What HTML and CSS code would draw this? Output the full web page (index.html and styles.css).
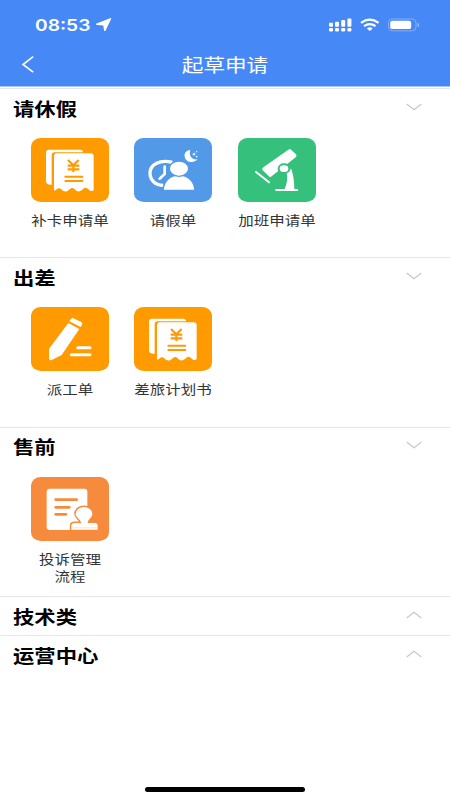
FILE: index.html
```
<!DOCTYPE html>
<html lang="zh-CN">
<head>
<meta charset="utf-8">
<title>起草申请</title>
<link rel="stylesheet" href="styles.css">
</head>
<body>
<svg class="defs" width="0" height="0">
  <symbol id="receipt" viewBox="33 24 234 192">
    <path d="M78 67Q78 59 86 59H181Q189 59 189 67H104Q95 67 95 76V164Q78 165 78 154Z" fill="#fff"/>
    <path d="M102 79Q102 70 111 70H212Q221 70 221 79V181C214 186 208 181 203 176Q197 171 190 176C180 186 172 187 164 178Q157 171 150 177C140 187 132 187 124 178Q117 171 110 178Q105 183 102 181Z" fill="#fff"/>
    <path d="M144 90L160 106L176 90M160 105V126M143 107H178M143 118H178" fill="none" stroke="#ff9b00" stroke-width="6.5"/>
    <path d="M136 140H187M136 153H187" stroke="#ff9b00" stroke-width="6" stroke-linecap="round"/>
  </symbol>
  <symbol id="chevron" viewBox="0 0 16 8"><path d="M.7 1L8 6.7L15.3 1" fill="none" stroke="#c6c6c6" stroke-width="1.1"/></symbol>
</svg>
<header class="top">
  <div class="status">
    <span class="time">08:53</span>
    <svg class="location" viewBox="0 0 16 14"><path d="M.5 5.6L14 .2Q15.6-.2 15 1.2L9.6 12.4Q8.6 13.8 8 12.4L7.3 7.4L1 7Q-.6 6.4.5 5.6Z" fill="#fff"/></svg>
    <svg class="signals" viewBox="0 0 92 14" fill="#fff">
      <rect x="0" y="4.8" width="4" height="4" rx="1"/><rect x="6" y="3.8" width="4" height="5" rx="1"/><rect x="12.2" y="2" width="4" height="6.8" rx="1"/><rect x="18.4" y=".5" width="4" height="8.3" rx="1"/>
      <rect x="0" y="10" width="4" height="3.5" rx="1.3"/><rect x="6" y="10" width="4" height="3.5" rx="1.3"/><rect x="12.2" y="10" width="4" height="3.5" rx="1.3"/><rect x="18.4" y="10" width="4" height="3.5" rx="1.3"/>
      <path d="M32 4.8Q40.8-1.5 49.6 4.8M35 8.2Q40.8 4 46.6 8.2" fill="none" stroke="#fff" stroke-width="2.2"/>
      <path d="M37.9 10.4Q40.8 8.2 43.7 10.4L40.8 13Z"/>
      <rect x="59.5" y="1" width="27.5" height="11.8" rx="3.8" fill="none" stroke="#84aefa"/>
      <rect x="61.2" y="2.7" width="21" height="8.4" rx="2.2"/><path d="M88.6 5Q90.2 5.2 90.2 7T88.6 9Z" fill="#9fc1fb"/>
    </svg>
  </div>
  <div class="nav">
    <svg class="back" viewBox="0 0 12 17"><path d="M11.2 .7L1 8.5L11.2 16.2" fill="none" stroke="#fff" stroke-width="1.6"/></svg>
    <h1><span>起草申请</span></h1>
  </div>
</header>
<main>
  <section class="group open">
    <div class="head"><h2>请休假</h2><svg class="chev"><use href="#chevron"/></svg></div>
    <div class="items">
      <div class="item"><svg class="tile orange"><use href="#receipt"/></svg><p>补卡申请单</p></div>
      <div class="item">
        <svg class="tile blue" viewBox="28 24 234 192">
          <path d="M143 97C106 87 76 104 76 130C76 151 93 166 116 166" fill="none" stroke="#fff" stroke-width="10"/>
          <path d="M120 110V132L105 146" fill="none" stroke="#fff" stroke-width="8" stroke-linecap="round"/>
          <path d="M115 181C117 153 136 135 163 135S209 153 211 181Z" fill="#fff" stroke="#5299e8" stroke-width="4"/>
          <ellipse cx="163" cy="116" rx="29" ry="23" fill="#fff" stroke="#5299e8" stroke-width="4"/>
          <path d="M197 60C184 61 178 70 180 80C184 99 209 101 218 88C203 91 191 77 197 60Z" fill="#fff"/>
          <path d="M208 67l2 4l4 1l-4 2l-2 4l-2-4l-4-2l4-1Z" fill="#fff"/><circle cx="216" cy="65" r="2" fill="#fff"/><circle cx="216" cy="80" r="2.4" fill="#fff"/>
        </svg><p>请假单</p>
      </div>
      <div class="item">
        <svg class="tile green" viewBox="30 24 234 192">
          <path d="M106 112L181 59Q186 55 190 60L204 73Q208 77 203 82L131 139Q126 143 122 138L104 121Q100 117 106 112Z" fill="#fff"/>
          <path d="M84 126L123 157" stroke="#fff" stroke-width="6" stroke-linecap="round"/>
          <path d="M164 127Q184 130 189 115Q199 142 199 177H209Q213 180 209 183H144Q138 180 144 177H170Q181 150 176 129Z" fill="#fff"/>
          <ellipse cx="168" cy="116" rx="16" ry="13" fill="#fff" stroke="#35c07c" stroke-width="6"/>
        </svg><p>加班申请单</p>
      </div>
    </div>
  </section>
  <section class="group open">
    <div class="head"><h2>出差</h2><svg class="chev"><use href="#chevron"/></svg></div>
    <div class="items">
      <div class="item">
        <svg class="tile orange" viewBox="33 22 234 192">
          <path d="M153 57Q157 53 163 57L184 67Q189 70 186 75L182 82L148 65Z" fill="#fff"/>
          <path d="M145 70L178 88L125 166L95 181Q87 184 87 176V147Z" fill="#fff"/>
          <path d="M173 144H210M154 165H210" stroke="#fff" stroke-width="9" stroke-linecap="round"/>
        </svg><p>派工单</p>
      </div>
      <div class="item"><svg class="tile orange"><use href="#receipt"/></svg><p>差旅计划书</p></div>
    </div>
  </section>
  <section class="group open">
    <div class="head"><h2>售前</h2><svg class="chev"><use href="#chevron"/></svg></div>
    <div class="items">
      <div class="item">
        <svg class="tile coral" viewBox="33 20 234 192">
          <rect x="80" y="55" width="122" height="124" rx="9" fill="#fff"/>
          <path d="M107 88H170M107 111H148M107 132H138" stroke="#f68b3e" stroke-width="8" stroke-linecap="round"/>
          <path d="M183 158C183 146 167 142 167 130A25 20 0 0 1 217 130C217 142 203 146 203 158H224Q233 158 233 166V178H154V166Q154 158 163 158Z" fill="#f68b3e" stroke="#f68b3e" stroke-width="9"/>
          <path d="M183 158C183 146 167 142 167 130A25 20 0 0 1 217 130C217 142 203 146 203 158H224Q233 158 233 166V178H154V166Q154 158 163 158Z" fill="#fff"/>
          <path d="M154 172.5H233" stroke="#fbc9a3" stroke-width="1.5"/>
        </svg><p>投诉管理<br>流程</p>
      </div>
    </div>
  </section>
  <section class="group"><div class="head"><h2>技术类</h2><svg class="chev up"><use href="#chevron"/></svg></div></section>
  <section class="group"><div class="head"><h2>运营中心</h2><svg class="chev up"><use href="#chevron"/></svg></div></section>
</main>
<footer><div class="home"></div></footer>
</body>
</html>
```
FILE: styles.css
```
* { box-sizing: border-box; margin: 0; padding: 0; }
body {
  display: flex;
  flex-direction: column;
  height: 800px;
  background: #fff;
  color: #000;
  font-family: "Liberation Sans", "Noto Sans CJK SC", sans-serif;
  overflow: hidden;
}
svg { display: block; flex: none; }
.defs { width: 0; height: 0; }
.top { height: 87px; background: #4788f7; border-bottom: 1px solid #a9c8fc; color: #fff; }
.status { display: flex; height: 44px; padding: 18px 29px 0 35px; }
.time {
  width: 61px;
  height: 14px;
  font: 600 16px/14px Inter, sans-serif;
  transform: scaleX(1.2);
  transform-origin: left;
}
.location { width: 16px; height: 14px; }
.signals { width: 92px; height: 14px; margin-left: auto; }
.nav { display: flex; height: 42px; padding: 0 22px; align-items: center; }
.back { width: 12px; height: 17px; margin-top: -2px; }
.nav h1 { flex: 1; padding: 2px 12px 0 0; text-align: center; font-size: 18px; font-weight: 400; line-height: 24px; }
.nav h1 span { display: inline-block; transform: scaleX(1.2); }
main { flex: 1; padding-top: 1px; }
.group { height: 39.3px; border-top: 1px solid #e6e6e6; }
.group.open { height: 169.4px; }
.head { display: flex; height: 39px; padding: 0 28px 0 13px; align-items: center; justify-content: space-between; }
.head h2 { padding-top: 2px; font-size: 18px; line-height: 24px; font-weight: 700; transform: scaleX(1.185); transform-origin: left; }
.chev { width: 16px; height: 8px; margin-bottom: 4px; }
.up { transform: scaleY(-1); }
.items { display: flex; gap: 25.4px; padding: 10px 0 0 31px; }
.item { width: 78px; }
.tile { width: 78px; height: 64px; border-radius: 10px / 8.5px; }
.orange { background: #ff9b00; }
.blue { background: #5299e8; }
.green { background: #35c07c; }
.coral { background: #f68b3e; }
.item p { margin-top: 10px; color: #333; font-size: 13px; line-height: 17.5px; text-align: center; white-space: nowrap; transform: scaleX(1.19); }
footer { display: flex; justify-content: center; height: 13px; }
.home { width: 160px; height: 5px; border-radius: 3px; background: #000; }
```
